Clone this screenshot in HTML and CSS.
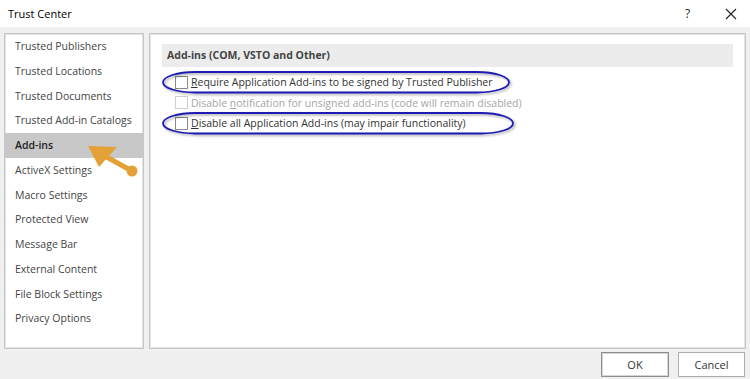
FILE: index.html
```html
<!DOCTYPE html>
<html>
<head>
<meta charset="utf-8">
<link rel="stylesheet" href="styles.css">
</head>
<body>
<div class="dialog">
  <div class="titlebar">
    <span class="title">Trust Center</span>
    <span class="help">?</span>
    <svg class="close" width="12" height="12" viewBox="0 0 12 12"><path d="M1 1 L11 11 M11 1 L1 11" stroke="#222" stroke-width="1.1" fill="none"/></svg>
  </div>
  <div class="main">
    <ul class="nav">
      <li>Trusted Publishers</li>
      <li>Trusted Locations</li>
      <li>Trusted Documents</li>
      <li>Trusted Add-in Catalogs</li>
      <li class="active">Add-ins</li>
      <li>ActiveX Settings</li>
      <li>Macro Settings</li>
      <li>Protected View</li>
      <li>Message Bar</li>
      <li>External Content</li>
      <li>File Block Settings</li>
      <li>Privacy Options</li>
    </ul>
    <div class="content">
      <div class="section-head">Add-ins (COM, VSTO and Other)</div>
      <div class="options">
        <label class="opt"><span class="box"></span><span><u>R</u>equire Application Add-ins to be signed by Trusted Publisher</span></label>
        <label class="opt disabled"><span class="box"></span><span>Disable <u>n</u>otification for unsigned add-ins (code will remain disabled)</span></label>
        <label class="opt"><span class="box"></span><span><u>D</u>isable all Application Add-ins (may impair functionality)</span></label>
      </div>
    </div>
  </div>
  <div class="footer">
    <button class="btn ok">OK</button>
    <button class="btn">Cancel</button>
  </div>
  <svg class="overlay" width="750" height="379" viewBox="0 0 750 379">
    <defs>
      <filter id="sh" x="-10%" y="-50%" width="120%" height="200%">
        <feDropShadow dx="1.5" dy="1.5" stdDeviation="1.2" flood-color="#000" flood-opacity="0.35"/>
      </filter>
    </defs>
    <rect x="163" y="72" width="346" height="20.5" rx="32" ry="10.25" fill="none" stroke="#1c1cb0" stroke-width="1.8" filter="url(#sh)"/>
    <rect x="163" y="113" width="350" height="20.5" rx="32" ry="10.25" fill="none" stroke="#1c1cb0" stroke-width="1.8" filter="url(#sh)"/>
    <line x1="132" y1="171" x2="103" y2="155" stroke="#e3a137" stroke-width="5" stroke-linecap="round"/>
    <circle cx="132" cy="171" r="5.5" fill="#e3a137"/>
    <polygon points="88,146 117,147 99,167" fill="#e3a137"/>
  </svg>
</div>
</body>
</html>
```
FILE: styles.css
```css
* { box-sizing: border-box; }
html, body { margin: 0; padding: 0; }
body {
  width: 750px;
  height: 379px;
  overflow: hidden;
  font-family: "Open Sans", "Noto Sans", sans-serif;
  font-size: 10.5px;
  color: #333;
}
.dialog {
  position: relative;
  width: 750px;
  height: 379px;
  background: #f0f0f0;
  display: flex;
  flex-direction: column;
}
.titlebar {
  height: 27px;
  background: #fff;
  display: flex;
  align-items: center;
  padding: 0 0 0 8px;
}
.title { flex: 1; font-size: 11px; color: #000; padding-bottom: 1px; }
.help { width: 12px; font-size: 12px; color: #222; margin-right: 28px; }
.close { margin-right: 13px; }
.main {
  display: flex;
  gap: 5px;
  padding: 6px 4px 0 4px;
  height: 322px;
}
.nav {
  list-style: none;
  margin: 0;
  padding: 0;
  width: 140px;
  height: 316px;
  background: #fff;
  border: 1px solid #c6c6c6;
  box-shadow: inset 0 0 0 1px #e4e4e4;
}
.nav li {
  height: 24.75px;
  line-height: 24px;
  padding-left: 10px;
  color: #444;
  white-space: nowrap;
}
.nav li.active { background: #c8c8c8; color: #222; font-weight: 600; }
.content {
  flex: 1;
  height: 316px;
  background: #fff;
  border: 1px solid #c6c6c6;
  box-shadow: inset 0 0 0 1px #e4e4e4;
  padding: 10px 12px 0 12px;
}
.section-head {
  height: 23px;
  background: #ececec;
  font-weight: 700;
  color: #444;
  line-height: 22px;
  padding-left: 5px;
}
.options {
  display: flex;
  flex-direction: column;
  padding: 5px 0 0 13px;
}
.opt {
  display: flex;
  align-items: center;
  height: 20.5px;
  gap: 3px;
  color: #333;
  white-space: nowrap;
}
.opt.disabled { color: #a6a6a6; }
.box {
  width: 13px;
  height: 13px;
  border: 1px solid #8a8a8a;
  background: #fff;
}
.opt.disabled .box { border-color: #cfcfcf; }
.footer {
  display: flex;
  justify-content: flex-end;
  gap: 9px;
  padding: 3px 5px 0 0;
}
.btn {
  height: 25px;
  width: 67px;
  background: #fff;
  border: 1px solid #adadad;
  font-family: inherit;
  font-size: 11px;
  color: #333;
  padding: 0;
}
.btn.ok { width: 68px; border: 1px solid #8e8e8e; box-shadow: inset 0 0 0 1px #d6d6d6; }
.overlay { position: absolute; left: 0; top: 0; pointer-events: none; }
```
